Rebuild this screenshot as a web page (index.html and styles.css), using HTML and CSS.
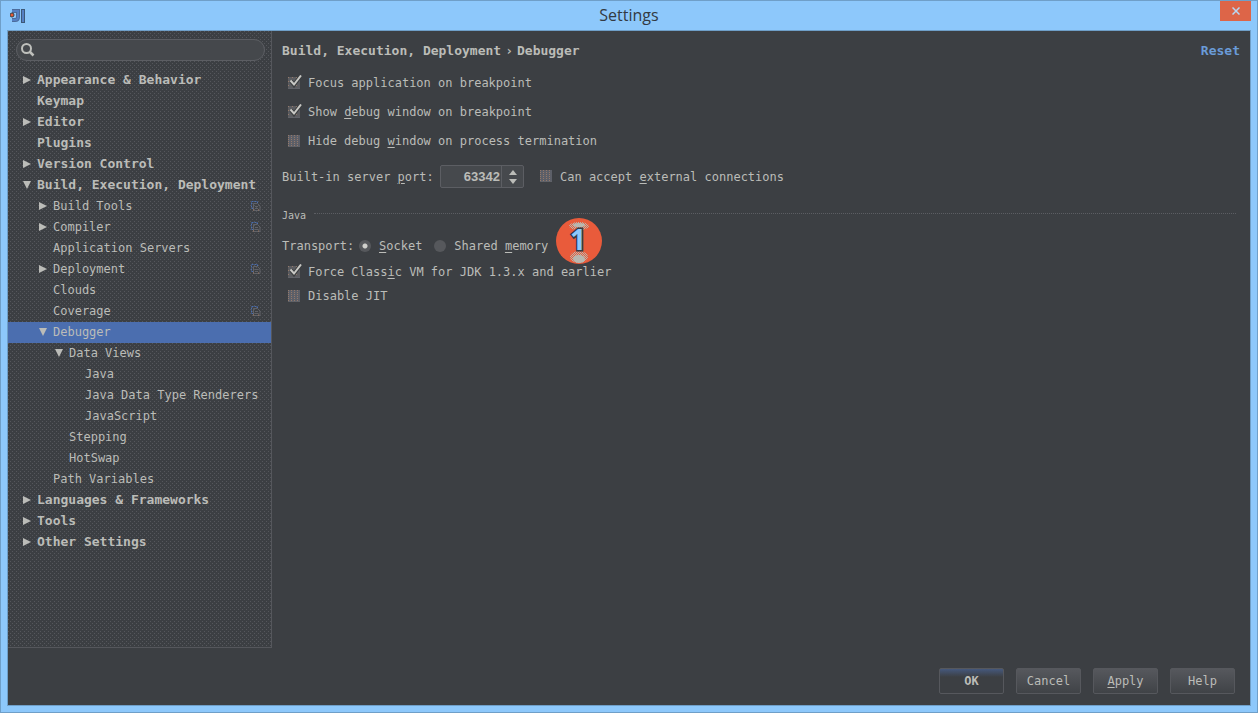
FILE: index.html
```
<!DOCTYPE html>
<html lang="en">
<head>
<meta charset="utf-8">
<title>Settings</title>
<link rel="stylesheet" href="styles.css">
</head>
<body>
<svg class="defs" aria-hidden="true">
  <symbol id="right" viewBox="0 0 8 8"><path d="M0 0L8 4L0 8Z"/></symbol>
  <symbol id="down" viewBox="0 0 8 8"><path d="M0 0H8L4 8Z"/></symbol>
  <symbol id="copy" viewBox="0 0 10 10"><path d="M2.500 7.500H.5V.5H6.500V2" fill="none" stroke="#4b6eaf" stroke-dasharray="2 1"/><path d="M2.500 2.500H6.500L9 5V9.500H2.500Z" fill="none" stroke="#606268"/><path d="M4 5.500H7M4 7.500H7" stroke="#606268"/><path d="M2 9h1M7 9h1" stroke="#a07860"/></symbol>
  <symbol id="tick" viewBox="0 0 14 14"><path d="M3 6L6 10L12.500 1" fill="none" stroke="#3c3f41" stroke-width="4"/><path d="M2.500 5.500L6 9.500L13 .5" fill="none" stroke="#c8c8c4" stroke-width="2"/></symbol>
</svg>
<div class="window">
  <header class="titlebar">
    <svg class="logo" width="16" height="16" viewBox="0 0 16 16" aria-hidden="true"><path d="M2 3H8V9Q8 12 5 12H2" fill="none" stroke="#4c6c9c" stroke-width="4"/><path d="M13 1V15" stroke="#3c5878" stroke-width="4"/><path d="M2 3H8V9Q8 12 5 12H2M13 2V14" fill="none" stroke="#5580c4" stroke-width="2"/><circle cx="2" cy="7" r="2" fill="#e85a38" stroke="#3c3f41"/></svg>
    <h1 class="title">Settings</h1>
    <button class="close" aria-label="Close"><svg width="8" height="8" viewBox="0 0 8 8"><path d="M.5 .5L7.500 7.500M7.500 .5L.5 7.500" stroke="#b8d8f4" stroke-width="1.500"/></svg></button>
  </header>
  <div class="dialog">
    <div class="columns">
      <nav class="sidebar" aria-label="Settings categories">
        <label class="search"><svg width="14" height="14" viewBox="0 0 14 14" aria-hidden="true"><circle cx="5.500" cy="5.500" r="4.500" fill="none" stroke="#bfc0bc" stroke-width="2"/><path d="M8.500 8.500L12.500 12.500" stroke="#bfc0bc" stroke-width="2.500"/></svg><input type="search" aria-label="Search settings"></label>
        <ul class="tree">
          <li><button class="row top"><svg class="arrow"><use href="#right"/></svg>Appearance &amp; Behavior</button></li>
          <li><button class="row top"><span class="arrow"></span>Keymap</button></li>
          <li><button class="row top"><svg class="arrow"><use href="#right"/></svg>Editor</button></li>
          <li><button class="row top"><span class="arrow"></span>Plugins</button></li>
          <li><button class="row top"><svg class="arrow"><use href="#right"/></svg>Version Control</button></li>
          <li><button class="row top"><svg class="arrow"><use href="#down"/></svg>Build, Execution, Deployment</button></li>
          <li><button class="row level1"><svg class="arrow"><use href="#right"/></svg>Build Tools<svg class="copy"><use href="#copy"/></svg></button></li>
          <li><button class="row level1"><svg class="arrow"><use href="#right"/></svg>Compiler<svg class="copy"><use href="#copy"/></svg></button></li>
          <li><button class="row level1"><span class="arrow"></span>Application Servers</button></li>
          <li><button class="row level1"><svg class="arrow"><use href="#right"/></svg>Deployment<svg class="copy"><use href="#copy"/></svg></button></li>
          <li><button class="row level1"><span class="arrow"></span>Clouds</button></li>
          <li><button class="row level1"><span class="arrow"></span>Coverage<svg class="copy"><use href="#copy"/></svg></button></li>
          <li><button class="row level1 selected"><svg class="arrow"><use href="#down"/></svg>Debugger</button></li>
          <li><button class="row level2"><svg class="arrow"><use href="#down"/></svg>Data Views</button></li>
          <li><button class="row level3"><span class="arrow"></span>Java</button></li>
          <li><button class="row level3"><span class="arrow"></span>Java Data Type Renderers</button></li>
          <li><button class="row level3"><span class="arrow"></span>JavaScript</button></li>
          <li><button class="row level2"><span class="arrow"></span>Stepping</button></li>
          <li><button class="row level2"><span class="arrow"></span>HotSwap</button></li>
          <li><button class="row level1"><span class="arrow"></span>Path Variables</button></li>
          <li><button class="row top"><svg class="arrow"><use href="#right"/></svg>Languages &amp; Frameworks</button></li>
          <li><button class="row top"><svg class="arrow"><use href="#right"/></svg>Tools</button></li>
          <li><button class="row top"><svg class="arrow"><use href="#right"/></svg>Other Settings</button></li>
        </ul>
      </nav>
      <main class="panel">
        <div class="heading"><h2 class="crumbs"><span>Build, Execution, Deployment</span><span class="sep">›</span><span>Debugger</span></h2><a class="reset" href="#">Reset</a></div>
        <div class="checks">
          <label class="check"><span class="box"><input type="checkbox" checked><svg class="tick"><use href="#tick"/></svg></span><span>Focus application on breakpoint</span></label>
          <label class="check"><span class="box"><input type="checkbox" checked><svg class="tick"><use href="#tick"/></svg></span><span>Show <u>d</u>ebug window on breakpoint</span></label>
          <label class="check"><span class="box"><input type="checkbox"><svg class="tick"><use href="#tick"/></svg></span><span>Hide debug <u>w</u>indow on process termination</span></label>
        </div>
        <div class="server">
          <label class="port-label" for="port">Built-in server <u>p</u>ort:</label>
          <div class="spinner"><input id="port" type="text" value="63342"><div class="steps"><button aria-label="Increase"><svg width="8" height="5" viewBox="0 0 8 5"><path d="M0 5L4 0L8 5Z"/></svg></button><button aria-label="Decrease"><svg width="8" height="5" viewBox="0 0 8 5"><path d="M0 0H8L4 5Z"/></svg></button></div></div>
          <label class="check"><span class="box"><input type="checkbox"><svg class="tick"><use href="#tick"/></svg></span><span>Can accept <u>e</u>xternal connections</span></label>
        </div>
        <h3 class="group">Java</h3>
        <div class="transport" role="radiogroup" aria-label="Transport">
          <span class="transport-label">Transport:</span>
          <label class="radio"><input type="radio" name="transport" checked><span><u>S</u>ocket</span></label>
          <label class="radio"><input type="radio" name="transport"><span>Shared <u>m</u>emory</span></label>
          <span class="anchor"><svg class="badge" width="46" height="46" viewBox="0 0 46 46"><defs><pattern id="grain" width="2" height="2" patternUnits="userSpaceOnUse"><path d="M0 0h1v1H0zM1 1h1v1H1z" fill="#b8b8b0"/></pattern></defs><circle cx="23" cy="23" r="23" fill="#e95b3b"/><ellipse cx="23" cy="8" rx="10" ry="4" fill="url(#grain)"/><ellipse cx="23" cy="7" rx="6" ry="2" fill="#b8b8b0"/><ellipse cx="23" cy="39" rx="9" ry="6" fill="url(#grain)"/><ellipse cx="23" cy="41" rx="6" ry="4" fill="#b8b8b0"/><text x="22" y="32" text-anchor="middle">1</text></svg></span>
        </div>
        <div class="java-checks">
          <label class="check"><span class="box"><input type="checkbox" checked><svg class="tick"><use href="#tick"/></svg></span><span>Force Class<u>i</u>c VM for JDK 1.3.x and earlier</span></label>
          <label class="check"><span class="box"><input type="checkbox"><svg class="tick"><use href="#tick"/></svg></span><span>Disable JIT</span></label>
        </div>
      </main>
    </div>
    <footer class="actions">
      <button class="action primary">OK</button>
      <button class="action">Cancel</button>
      <button class="action"><span><u>A</u>pply</span></button>
      <button class="action">Help</button>
    </footer>
  </div>
</div>
</body>
</html>
```
FILE: styles.css
```
* { box-sizing: border-box; }
body { margin: 0; background: #8dc8fb; color: #bbbcb8; font: 12px/16px "DejaVu Sans Mono", "Liberation Mono", monospace; }
h1, h2, h3, ul { margin: 0; padding: 0; font: inherit; }
ul { list-style: none; }
button, input { margin: 0; padding: 0; border: 0; background: none; color: inherit; font: inherit; }
svg { display: block; fill: #bbbcb8; flex: none; }
u { text-underline-offset: 2px; }
.defs { position: absolute; width: 0; height: 0; }
.window { min-height: 100vh; display: flex; flex-direction: column; border: 1px solid #6f9fc8; padding: 0 6px 6px; }
.titlebar { display: grid; grid-template-columns: 1fr auto 1fr; height: 29px; align-items: center; }
.logo { margin-left: 3px; }
.title { padding-bottom: 2px; font: 16px/20px "Open Sans", sans-serif; color: #333a42; }
.close { justify-self: end; align-self: start; width: 31px; height: 20px; display: grid; place-items: center; background: #dd6548; }
.dialog { flex: 1; display: flex; flex-direction: column; border: 1px solid #6f9fc8; background: #3c3f43; }
.columns { flex: 1; display: flex; }
.sidebar { width: 264px; flex: none; padding: 8px 0; border-right: 1px solid #55575c; border-bottom: 1px solid #55575c;
  background-color: #3c3f43;
  background-image: conic-gradient(from 270deg at 1px 1px, #55575c 90deg, transparent 0), conic-gradient(from 270deg at 1px 1px, #55575c 90deg, transparent 0);
  background-position: 0 0, 2px 2px;
  background-size: 4px 4px; }
.search { display: flex; align-items: center; gap: 8px; height: 22px; margin: 0 6px 9px 8px; padding: 0 8px 0 4px; border: 1px solid #5c5e63; border-radius: 11px; background: #45484c; }
.search input { flex: 1; min-width: 0; outline: 0; }
.row { display: flex; align-items: center; width: 100%; height: 21px; padding-right: 10px; padding-bottom: 2px; gap: 6px; text-align: left; white-space: nowrap; }
.arrow { width: 8px; height: 8px; flex: none; }
.top { padding-left: 15px; font-weight: bold; font-size: 13px; }
.level1 { padding-left: 31px; }
.level2 { padding-left: 47px; }
.level3 { padding-left: 63px; }
.selected { background: #4b6eaf; }
.copy { width: 10px; height: 10px; margin-left: auto; }
.panel { flex: 1; min-width: 0; padding: 12px 10px; }
.heading { display: flex; justify-content: space-between; font-size: 13px; font-weight: bold; }
.crumbs { display: flex; gap: 4px; }
.reset { color: #6a9bd8; text-decoration: none; }
.checks { display: flex; flex-direction: column; align-items: flex-start; gap: 13px; margin: 16px 0 0 6px; }
.check { display: flex; align-items: center; gap: 8px; white-space: nowrap; }
.box { display: grid; width: 12px; height: 13px; }
.box input { appearance: none; grid-area: 1 / 1; width: 12px; height: 12px; border-bottom: 1px solid #606268;
  background: conic-gradient(from 270deg at 1px 1px, #94796a 90deg, transparent 0) 0 0 / 3px 2px #5c5f68; }
.box input:checked { background-color: #5b5c60; background-size: 4px 4px; }
.tick { grid-area: 1 / 1; width: 14px; height: 14px; margin-top: -2px; visibility: hidden; }
input:checked + .tick { visibility: visible; }
.server { display: flex; align-items: center; margin-top: 16px; }
.port-label { min-width: 158px; }
.spinner { display: flex; width: 84px; height: 23px; margin-right: 16px; border: 1px solid #5c5e63; border-radius: 2px; background: #46494d; }
.spinner input { flex: 1; min-width: 0; text-align: right; padding-right: 1px; font: bold 13px/20px "Liberation Sans", sans-serif; }
.steps { width: 22px; border-left: 1px solid #5c5e63; display: grid; gap: 4px; align-content: center; justify-content: center; }
.steps button { display: block; }
.group { display: flex; align-items: flex-start; gap: 8px; margin: 20px 4px 0 0; font-size: 10px; }
.group::after { content: ""; flex: 1; margin-top: 5px; border-top: 1px dotted #5c5e63; }
.transport { display: flex; align-items: center; margin-top: 14px; }
.transport-label { min-width: 77px; }
.radio { display: flex; align-items: center; gap: 8px; margin-right: 12px; white-space: nowrap; }
.radio + .radio { margin-right: 8px; }
.radio input { appearance: none; width: 12px; height: 12px; border-radius: 50%; background: #56585c; }
.radio input:checked { background: radial-gradient(circle, #d0d0cc 2px, #56585c 3px); }
.anchor { position: relative; }
.badge { position: absolute; top: -28px; left: 0; }
.badge text { font: bold 28px "Open Sans", sans-serif; fill: #8dc8fb; stroke: #343a42; stroke-width: 3px; paint-order: stroke; }
.java-checks { display: flex; flex-direction: column; align-items: flex-start; gap: 8px; margin: 10px 0 0 6px; }
.actions { display: flex; justify-content: flex-end; gap: 12px; padding: 20px 15px 11px; }
.action { display: grid; place-items: center; width: 65px; height: 26px; border: 1px solid #56585d; border-radius: 2px; background: linear-gradient(#56585d, #404347); }
.primary { background: linear-gradient(#45587c, #3c3f43 8px); font-weight: bold; }
```
